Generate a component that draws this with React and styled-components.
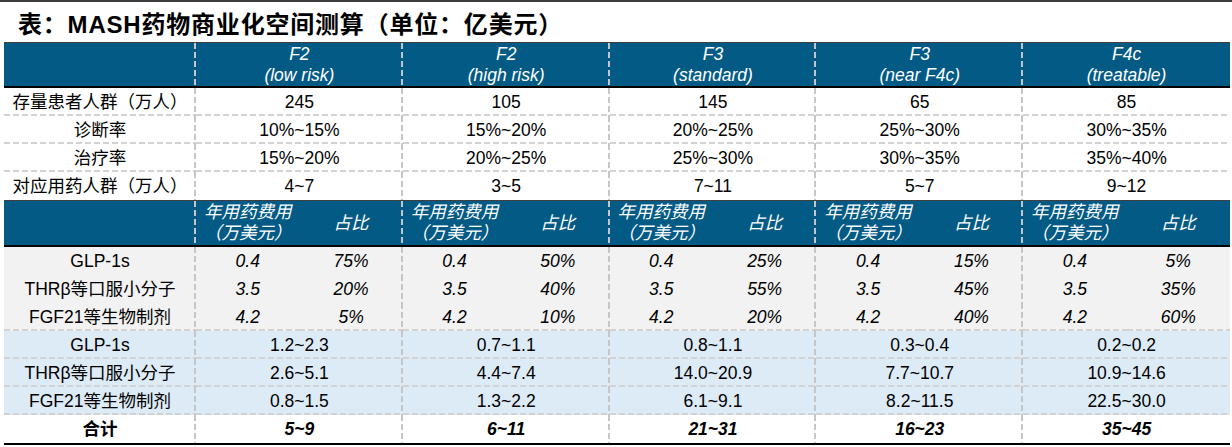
import React from "react";
import styled, { createGlobalStyle, css } from "styled-components";

const stages = [
  {
    stage: "F2",
    note: "(low risk)",
    pop: "245",
    diag: "10%~15%",
    treat: "15%~20%",
    users: "4~7",
    shares: ["75%", "20%", "5%"],
    ranges: ["1.2~2.3", "2.6~5.1", "0.8~1.5"],
    total: "5~9",
  },
  {
    stage: "F2",
    note: "(high risk)",
    pop: "105",
    diag: "15%~20%",
    treat: "20%~25%",
    users: "3~5",
    shares: ["50%", "40%", "10%"],
    ranges: ["0.7~1.1", "4.4~7.4", "1.3~2.2"],
    total: "6~11",
  },
  {
    stage: "F3",
    note: "(standard)",
    pop: "145",
    diag: "20%~25%",
    treat: "25%~30%",
    users: "7~11",
    shares: ["25%", "55%", "20%"],
    ranges: ["0.8~1.1", "14.0~20.9", "6.1~9.1"],
    total: "21~31",
  },
  {
    stage: "F3",
    note: "(near F4c)",
    pop: "65",
    diag: "25%~30%",
    treat: "30%~35%",
    users: "5~7",
    shares: ["15%", "45%", "40%"],
    ranges: ["0.3~0.4", "7.7~10.7", "8.2~11.5"],
    total: "16~23",
  },
  {
    stage: "F4c",
    note: "(treatable)",
    pop: "85",
    diag: "30%~35%",
    treat: "35%~40%",
    users: "9~12",
    shares: ["5%", "35%", "60%"],
    ranges: ["0.2~0.2", "10.9~14.6", "22.5~30.0"],
    total: "35~45",
  },
];

const drugs = ["GLP-1s", "THRβ等口服小分子", "FGF21等生物制剂"];
const costs = ["0.4", "3.5", "4.2"];

const basics = [
  { label: "存量患者人群（万人）", key: "pop" },
  { label: "诊断率", key: "diag" },
  { label: "治疗率", key: "treat" },
  { label: "对应用药人群（万人）", key: "users" },
];

const GlobalStyle = createGlobalStyle`
  body {
    margin: 0;
    background: #ffffff;
    font-family: "Liberation Sans", Arial, "Noto Sans CJK SC", sans-serif;
    color: #000;
  }
`;

const tones = {
  head: "#035a85",
  white: "#ffffff",
  gray: "#f2f2f2",
  blue: "#ddebf7",
};

// dashed rules drawn as cell backgrounds so the dash rhythm matches the sheet
const dashV = "repeating-linear-gradient(to bottom, #c6c6c6 0 6px, transparent 6px 9px)";
const dashH = "repeating-linear-gradient(to right, #d2d2d2 0 6px, transparent 6px 9px)";

const Page = styled.div`
  width: 1232px;
  height: 447px;
  overflow: hidden;
`;

const TopRule = styled.div`
  height: 2px;
  background: #3c3c3c;
`;

const Title = styled.h1`
  margin: 0;
  height: 40px;
  padding-left: 18px;
  display: flex;
  align-items: center;
  font-size: 24px;
  font-weight: 700;
  letter-spacing: 0.8px;
  font-family: "Liberation Sans", Arial, "Noto Sans CJK SC", sans-serif;
`;

const Table = styled.table`
  margin-left: 4px;
  width: 1226px;
  border-collapse: separate;
  border-spacing: 0;
  table-layout: fixed;
  font-size: 17.5px;
`;

const Row = styled.tr`
  height: ${(p) => p.$h || 28}px;
`;

const Cell = styled.td`
  padding: 0;
  text-align: center;
  vertical-align: middle;
  white-space: nowrap;
  line-height: 21px;
  background-color: ${(p) => tones[p.$tone || "white"]};
  color: ${(p) => (p.$tone === "head" ? "#ffffff" : "#000000")};
  font-style: ${(p) => (p.$italic ? "italic" : "normal")};
  font-weight: ${(p) => (p.$bold ? 700 : 400)};
  background-repeat: no-repeat;
  ${(p) => {
    const imgs = [];
    const sizes = [];
    const pos = [];
    if (p.$vline) {
      imgs.push(dashV);
      sizes.push("2px 100%");
      pos.push("right top");
    }
    if (p.$hline) {
      imgs.push(dashH);
      sizes.push("100% 2px");
      pos.push("left bottom");
    }
    if (!imgs.length) return "";
    return css`
      background-image: ${imgs.join(", ")};
      background-size: ${sizes.join(", ")};
      background-position: ${pos.join(", ")};
    `;
  }}
  ${(p) =>
    p.$top &&
    css`
      border-top: 1px solid #3f3f3f;
    `}
  ${(p) =>
    p.$under &&
    css`
      border-bottom: 2px solid #000000;
    `}
`;

const Line = styled.span`
  display: block;
`;

const App = () => {
  const last = stages.length - 1;
  return (
    <Page>
      <GlobalStyle />
      <TopRule />
      <Title>表：MASH药物商业化空间测算（单位：亿美元）</Title>
      <Table>
        <colgroup>
          <col style={{ width: 192 }} />
          {Array.from({ length: 10 }).map((_, i) => (
            <col key={i} />
          ))}
        </colgroup>
        <tbody>
          <Row $h={46}>
            <Cell $tone="head" $vline $top $under />
            {stages.map((s, i) => (
              <Cell
                key={i}
                colSpan={2}
                $tone="head"
                $italic
                $vline={i < last}
                $top
                $under
              >
                <Line>{s.stage}</Line>
                <Line>{s.note}</Line>
              </Cell>
            ))}
          </Row>
          {basics.map((b, r) => (
            <Row key={b.key}>
              <Cell $vline $hline={r < 3}>
                {b.label}
              </Cell>
              {stages.map((s, i) => (
                <Cell key={i} colSpan={2} $vline={i < last} $hline={r < 3}>
                  {s[b.key]}
                </Cell>
              ))}
            </Row>
          ))}
          <Row $h={47}>
            <Cell $tone="head" $vline $top $under />
            {stages.map((s, i) => (
              <React.Fragment key={i}>
                <Cell $tone="head" $italic $top $under>
                  <Line>年用药费用</Line>
                  <Line>（万美元）</Line>
                </Cell>
                <Cell $tone="head" $italic $vline={i < last} $top $under>
                  占比
                </Cell>
              </React.Fragment>
            ))}
          </Row>
          {drugs.map((d, r) => (
            <Row key={d}>
              <Cell $tone="gray" $vline $hline={r === 2}>
                {d}
              </Cell>
              {stages.map((s, i) => (
                <React.Fragment key={i}>
                  <Cell $tone="gray" $italic $hline={r === 2}>
                    {costs[r]}
                  </Cell>
                  <Cell
                    $tone="gray"
                    $italic
                    $vline={i < last}
                    $hline={r === 2}
                  >
                    {s.shares[r]}
                  </Cell>
                </React.Fragment>
              ))}
            </Row>
          ))}
          {drugs.map((d, r) => (
            <Row key={`r-${d}`}>
              <Cell $tone="blue" $vline $hline>
                {d}
              </Cell>
              {stages.map((s, i) => (
                <Cell
                  key={i}
                  colSpan={2}
                  $tone="blue"
                  $vline={i < last}
                  $hline
                >
                  {s.ranges[r]}
                </Cell>
              ))}
            </Row>
          ))}
          <Row $h={30}>
            <Cell $bold $vline $under>
              合计
            </Cell>
            {stages.map((s, i) => (
              <Cell
                key={i}
                colSpan={2}
                $bold
                $italic
                $vline={i < last}
                $under
              >
                {s.total}
              </Cell>
            ))}
          </Row>
        </tbody>
      </Table>
    </Page>
  );
};

export default App;
